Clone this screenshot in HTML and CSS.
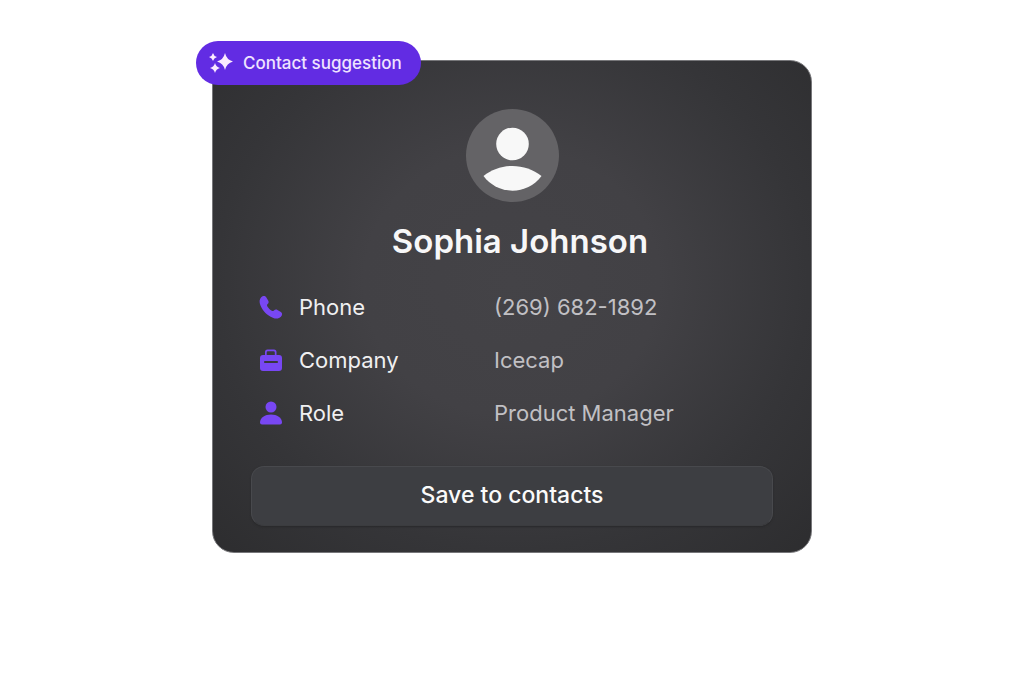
FILE: index.html
```html
<!DOCTYPE html>
<html lang="en">
<head>
<meta charset="utf-8">
<meta name="viewport" content="width=device-width, initial-scale=1">
<title>Contact suggestion</title>
<link rel="stylesheet" href="styles.css">
</head>
<body>
<main class="page">
  <article class="card">
    <div class="badge">
      <svg class="badge-icon" viewBox="0 0 24 22" aria-hidden="true">
        <path d="M16 1Q17.600 7.900 24 9.500Q17.600 11.100 16 18Q14.400 11.100 8 9.500Q14.400 7.900 16 1Z"/>
        <path d="M4 1Q4.800 4.200 8 5Q4.800 5.800 4 9Q3.200 5.800 0 5Q3.200 4.200 4 1Z"/>
        <path d="M6 11Q7 15 11 16Q7 17 6 21Q5 17 1 16Q5 15 6 11Z"/>
      </svg>
      <span>Contact suggestion</span>
    </div>
    <svg class="avatar" viewBox="0 0 93 93" aria-hidden="true">
      <circle class="avatar-bg" cx="46.500" cy="46.500" r="46.500"/>
      <circle class="avatar-fg" cx="46.500" cy="35" r="16.300"/>
      <path class="avatar-fg" d="M17.500 67C34 53.500 59 53.500 75.500 67C61 86.500 32 86.500 17.500 67Z"/>
    </svg>
    <h1 class="name">Sophia Johnson</h1>
    <dl class="details">
      <div class="row">
        <dt class="label">
          <svg class="icon" viewBox="0 0 24 24" aria-hidden="true"><path d="M2.200 2.300C3.700.7 6 .3 7.200 2.200L9.300 5.700C10 7 9.600 8.100 8.600 9.100C7.900 9.900 7.900 10.500 8.400 11.400C9.600 13.300 11 14.700 12.800 15.800C13.600 16.300 14.200 16.200 14.900 15.500C16 14.500 17.200 14.200 18.400 14.900L21.900 17C23.600 18.100 23.400 20.300 21.900 21.800C19.900 23.900 16.800 24 13.800 22.700C8 20.200 3.600 15.800 1.400 10.200C.2 7.200.2 4.400 2.200 2.300Z"/></svg>
          Phone
        </dt>
        <dd class="value">(269) 682-1892</dd>
      </div>
      <div class="row">
        <dt class="label">
          <svg class="icon" viewBox="0 0 24 24" aria-hidden="true"><path fill-rule="evenodd" d="M6 7V4Q6 1.500 8.500 1.500H15Q17.500 1.500 17.500 4V7H20Q23 7 23 10V20Q23 23 20 23H4Q1 23 1 20V10Q1 7 4 7ZM7.700 7H15.800V4.500Q15.800 3.300 14.600 3.300H8.900Q7.700 3.300 7.700 4.500ZM5.800 13H18.200Q19 13 19 14T18.200 15H5.800Q5 15 5 14T5.800 13Z"/></svg>
          Company
        </dt>
        <dd class="value">Icecap</dd>
      </div>
      <div class="row">
        <dt class="label">
          <svg class="icon" viewBox="0 0 24 24" aria-hidden="true"><circle cx="12" cy="6" r="5.500"/><path d="M1 21.500C1 16.500 6 13.500 12 13.500S23 16.500 23 21.500Q23 23.500 21 23.500H3Q1 23.500 1 21.500Z"/></svg>
          Role
        </dt>
        <dd class="value">Product Manager</dd>
      </div>
    </dl>
    <button class="save" type="button">Save to contacts</button>
  </article>
</main>
</body>
</html>
```
FILE: styles.css
```css
* {
  box-sizing: border-box;
}

body {
  margin: 0;
  background: #fff;
  font-family: Inter, "Liberation Sans", sans-serif;
}

.page {
  display: flex;
  justify-content: center;
  padding: 60px 24px;
}

.card {
  position: relative;
  display: flex;
  flex-direction: column;
  align-items: center;
  width: 100%;
  max-width: 600px;
  padding: 48px 38px 26px;
  border: 1px solid #77777a;
  border-radius: 22px;
  background: radial-gradient(ellipse at 50% 45%, #444347 0%, #424145 35%, #353538 70%, #2d2d2f 100%);
}

.badge {
  position: absolute;
  top: -20px;
  left: -17px;
  display: flex;
  align-items: center;
  gap: 10px;
  height: 44px;
  padding: 0 19px 0 13px;
  border-radius: 22px;
  background: #622ce3;
  color: #efe3ff;
  font-size: 17px;
  font-weight: 500;
  white-space: nowrap;
}

.badge-icon {
  width: 24px;
  height: 22px;
  fill: #fbeaff;
}

.avatar {
  width: 93px;
  height: 93px;
}

.avatar-bg {
  fill: #646366;
}

.avatar-fg {
  fill: #f8f8f8;
}

.name {
  margin: 17px 0 0;
  padding-left: 16px;
  color: #f7f7f8;
  font-size: 33px;
  font-weight: 600;
  line-height: 44px;
}

.details {
  display: grid;
  align-self: stretch;
  gap: 21px;
  margin: 28px 0 0;
  padding: 0 8px;
}

.row {
  display: grid;
  grid-template-columns: 235px 1fr;
  align-items: center;
  line-height: 32px;
  font-size: 22px;
}

.label {
  display: flex;
  align-items: center;
  gap: 16px;
  color: #f0f0f1;
}

.icon {
  width: 24px;
  height: 24px;
  fill: #7847f3;
}

.value {
  margin: 0;
  color: #c1c0c4;
}

.save {
  align-self: stretch;
  height: 60px;
  margin-top: 37px;
  padding: 0 0 3px;
  border: 1px solid #48494d;
  border-bottom-color: #3b3c3f;
  border-radius: 13px;
  background: #3d3e42;
  box-shadow: 0 1px 2px #28282a;
  color: #fafafa;
  font: 500 23px/28px Inter, "Liberation Sans", sans-serif;
}
```
